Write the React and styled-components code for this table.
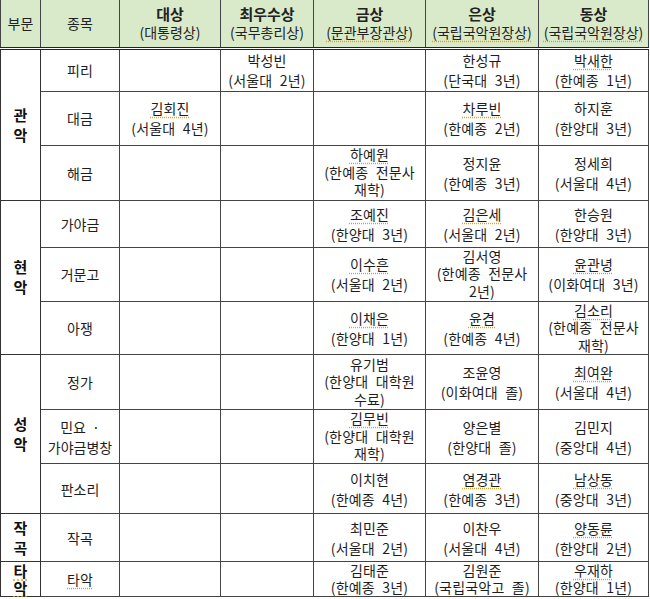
import React from 'react'
import styled, { createGlobalStyle } from 'styled-components'

const Global = createGlobalStyle`
  html, body {
    margin: 0;
    padding: 0;
    overflow: hidden;
    background: #fff;
  }
  body {
    font-family: "Noto Sans CJK KR", "Noto Sans", sans-serif;
    color: #1e1e1e;
  }
`

const Table = styled.table`
  width: 649px;
  border-collapse: collapse;
  table-layout: fixed;
  font-size: 14px;
  border-left: 1px solid #444;
  border-right: 1px solid #444;
`

const Row = styled.tr`
  height: ${p => p.$h}px;
`

const HeadCell = styled.th`
  background: #d9eacb;
  font-weight: normal;
  text-align: center;
  vertical-align: middle;
  padding: 0 2px;
  border: 1px solid #444;
  border-bottom: 3px double #222;
  border-top: none;
  color: #222;
  line-height: 18px;
  b {
    display: block;
    font-weight: bold;
    font-size: 15px;
  }
`

const GroupCell = styled.td`
  text-align: center;
  vertical-align: middle;
  font-weight: bold;
  font-size: 15px;
  line-height: ${p => p.$lh}px;
  padding: 0;
  border: 1px solid #333;
  color: #111;
`

const ItemCell = styled.td`
  text-align: center;
  vertical-align: middle;
  padding: 0 2px;
  border: 1px solid #444;
  word-spacing: 3px;
  line-height: ${p => p.$lh}px;
`

const Cell = styled.td`
  text-align: center;
  vertical-align: middle;
  padding: 0;
  border: 1px solid #444;
  white-space: nowrap;
  word-spacing: 4px;
  letter-spacing: 0.2px;
  line-height: ${p => p.$lh}px;
`

const Squiggle = styled.span`
  text-decoration: underline dotted #d9a030;
  text-underline-offset: 3px;
`

const cols = [40, 79, 101, 93, 112, 113, 110]

const heads = [
  { sub: '부문' },
  { sub: '종목' },
  { title: '대상', sub: '(대통령상)' },
  { title: '최우수상', sub: '(국무총리상)' },
  { title: '금상', sub: '~(문관부장관상)' },
  { title: '은상', sub: '~(국립국악원장상)' },
  { title: '동상', sub: '~(국립국악원장상)' },
]

const groups = [
  {
    name: '관\n악',
    rows: [
      { item: '피리', h: 43, cells: ['', '박성빈\n(서울대 2년)', '', '한성규\n(단국대 3년)', '~박새한\n(한예종 1년)'] },
      { item: '대금', h: 54, cells: ['~김회진\n(서울대 4년)', '', '', '~차루빈\n(한예종 2년)', '하지훈\n(한양대 3년)'] },
      { item: '해금', h: 55, cells: ['', '', '~하예원\n(한예종 전문사\n재학)', '정지윤\n(한예종 3년)', '정세희\n(서울대 4년)'] },
    ],
  },
  {
    name: '현\n악',
    rows: [
      { item: '가야금', h: 47, cells: ['', '', '~조예진\n(한양대 3년)', '~김은세\n(서울대 2년)', '한승원\n(한양대 3년)'] },
      { item: '거문고', h: 54, cells: ['', '', '~이수흔\n(서울대 2년)', '김서영\n(한예종 전문사\n2년)', '~윤관녕\n(이화여대 3년)'] },
      { item: '아쟁', h: 53, cells: ['', '', '~이채은\n(한양대 1년)', '~윤겸\n(한예종 4년)', '~김소리\n(한예종 전문사\n재학)'] },
    ],
  },
  {
    name: '성\n악',
    rows: [
      { item: '정가', h: 55, cells: ['', '', '유기범\n(한양대 대학원\n수료)', '조윤영\n(이화여대 졸)', '~최여완\n(서울대 4년)'] },
      { item: '민요 ·\n가야금병창', h: 54, cells: ['', '', '~김무빈\n(한양대 대학원\n재학)', '양은별\n(한양대 졸)', '김민지\n(중앙대 4년)'] },
      { item: '판소리', h: 50, cells: ['', '', '이치현\n(한예종 4년)', '~염경관\n(한예종 3년)', '~남상동\n(중앙대 3년)'] },
    ],
  },
  {
    name: '작\n곡',
    rows: [
      { item: '작곡', h: 48, cells: ['', '', '최민준\n(서울대 2년)', '이찬우\n(서울대 4년)', '~양동륜\n(한양대 2년)'] },
    ],
  },
  {
    name: '~타\n~악',
    tight: true,
    rows: [
      { item: '~타악', h: 35, tight: true, cells: ['', '', '김태준\n(한예종 3년)', '김원준\n(국립국악고 졸)', '~우재하\n(한양대 1년)'] },
    ],
  },
]

const lineHeight = (text, tight) => {
  if (tight) return 17
  return text.split('\n').length >= 3 ? 17.5 : 20
}

function Lines({ text }) {
  if (!text) return null
  const parts = text.split('\n')
  return parts.map((line, i) => (
    <React.Fragment key={i}>
      {line.startsWith('~') ? <Squiggle>{line.slice(1)}</Squiggle> : line}
      {i < parts.length - 1 && <br />}
    </React.Fragment>
  ))
}

export default function App() {
  return (
    <>
      <Global />
      <Table>
        <colgroup>
          {cols.map((w, i) => <col key={i} style={{ width: w }} />)}
        </colgroup>
        <thead>
          <Row $h={48}>
            {heads.map((h, i) => (
              <HeadCell key={i}>
                {h.title && <b>{h.title}</b>}
                <Lines text={h.sub} />
              </HeadCell>
            ))}
          </Row>
        </thead>
        <tbody>
          {groups.map(g =>
            g.rows.map((r, ri) => (
              <Row key={g.name + ri} $h={r.h}>
                {ri === 0 && (
                  <GroupCell rowSpan={g.rows.length} $lh={g.tight ? 17 : 20}>
                    <Lines text={g.name} />
                  </GroupCell>
                )}
                <ItemCell $lh={lineHeight(r.item, r.tight)}><Lines text={r.item} /></ItemCell>
                {r.cells.map((c, ci) => (
                  <Cell key={ci} $lh={lineHeight(c, r.tight)}><Lines text={c} /></Cell>
                ))}
              </Row>
            ))
          )}
        </tbody>
      </Table>
    </>
  )
}
